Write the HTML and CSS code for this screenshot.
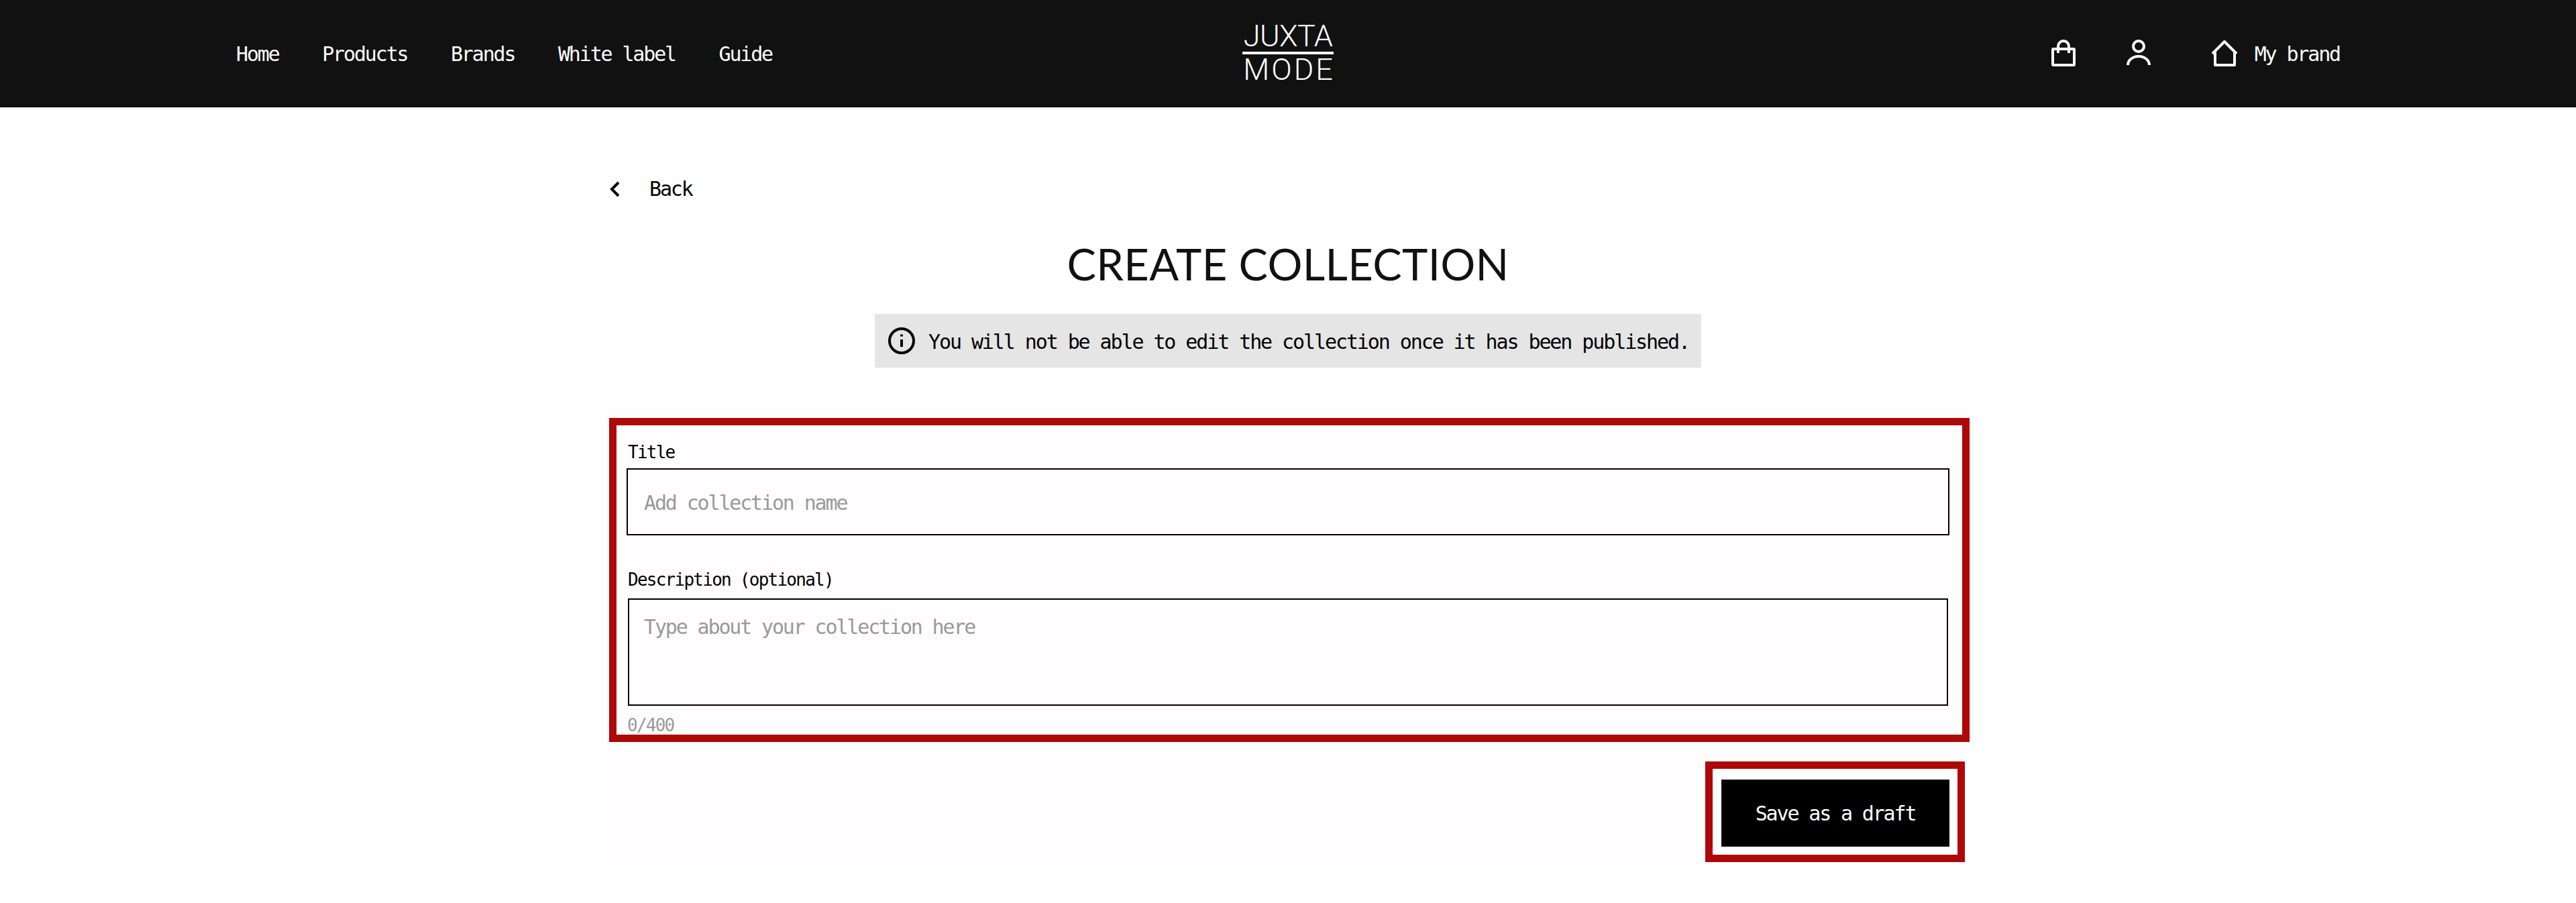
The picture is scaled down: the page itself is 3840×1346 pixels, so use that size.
FILE: index.html
```html
<!DOCTYPE html>
<html lang="en">
<head>
    <meta charset="UTF-8">
    <meta name="viewport" content="width=device-width, initial-scale=1.0">
    <title>Create collection</title>
    <link rel="stylesheet" href="styles.css">
</head>
<body>

    <header class="site-header">
        <nav class="main-nav">
            <a href="#">Home</a>
            <a href="#">Products</a>
            <a href="#">Brands</a>
            <a href="#">White label</a>
            <a href="#">Guide</a>
        </nav>

        <a href="#" class="logo">
            <span class="logo-top">JUXTA</span>
            <span class="logo-bottom">MODE</span>
        </a>

        <div class="header-actions">
            <a href="#" class="icon-link" aria-label="Bag">
                <svg class="icon" viewBox="0 0 48 48"><rect x="8" y="18" width="32" height="24" rx="1"/><path d="M16 24V14a8 8 0 0 1 16 0v10"/></svg>
            </a>
            <a href="#" class="icon-link" aria-label="Account">
                <svg class="icon" viewBox="0 0 48 48"><circle cx="24" cy="14" r="8"/><path d="M8 42a16 13 0 0 1 32 0"/></svg>
            </a>
            <a href="#" class="brand-link">
                <svg class="icon" viewBox="0 0 48 48"><path d="M6 25 24 7l18 18"/><path d="M10 21v21h29V21"/></svg>
                <span>My brand</span>
            </a>
        </div>
    </header>

    <main class="page">
        <a href="#" class="back-link">
            <svg class="back-icon" viewBox="0 0 16 24"><path d="M14 2 4 12l10 10"/></svg>
            <span>Back</span>
        </a>

        <h1 class="page-title">CREATE COLLECTION</h1>

        <div class="notice">
            <svg class="notice-icon" viewBox="0 0 40 40"><circle cx="20" cy="20" r="18"/><path d="M20 18v11"/><path d="M20 10.500v3"/></svg>
            <span>You will not be able to edit the collection once it has been published.</span>
        </div>

        <form class="collection-form">
            <div class="form-fields">
                <label class="field-label" for="title">Title</label>
                <input class="title-input" type="text" id="title" placeholder="Add collection name">

                <label class="field-label desc-label" for="description">Description (optional)</label>
                <textarea class="desc-input" id="description" placeholder="Type about your collection here"></textarea>
                <div class="counter">0/400</div>
            </div>

            <div class="form-actions">
                <div class="draft-box">
                    <button type="button" class="draft-btn">Save as a draft</button>
                </div>
            </div>
        </form>
    </main>

</body>
</html>
```

FILE: styles.css
```css
* {
    box-sizing: border-box;
}

body {
    margin: 0;
    height: 1346px;
    overflow: hidden;
    background: #fff;
    color: #000;
    font-family: "DejaVu Sans Mono", monospace;
    font-size: 30px;
    letter-spacing: -2.150px;
}

a {
    color: inherit;
    text-decoration: none;
}

.site-header {
    height: 160px;
    padding: 3px 352px 0;
    display: grid;
    grid-template-columns: 1fr auto 1fr;
    align-items: center;
    background: #111;
    border-bottom: 2px solid #000;
    color: #fff;
}

.main-nav {
    display: flex;
    gap: 64.500px;
}

.logo {
    width: 136px;
    margin-top: -3px;
    display: flex;
    flex-direction: column;
    font-family: "Roboto", sans-serif;
    font-size: 45px;
    font-weight: 300;
    line-height: 42px;
    letter-spacing: -0.500px;
    text-align: center;
}

.logo-top {
    padding-bottom: 2px;
    border-bottom: 4px solid #fff;
}

.logo-bottom {
    padding-top: 2px;
    letter-spacing: 3px;
    margin-right: -3px;
}

.header-actions {
    margin-top: -3px;
    display: flex;
    justify-content: flex-end;
    align-items: center;
}

.icon {
    display: block;
    width: 48px;
    height: 48px;
    fill: none;
    stroke: #fff;
    stroke-width: 4;
    stroke-linejoin: round;
}

.icon-link {
    margin-right: 64px;
}

.icon-link + .brand-link {
    margin-left: 16px;
}

.brand-link {
    display: flex;
    align-items: center;
    gap: 21px;
}

.brand-link span {
    margin-top: 3px;
}

.page {
    width: 2040px;
    margin: 0 auto;
    display: flex;
    flex-direction: column;
    align-items: center;
}

.back-link {
    align-self: flex-start;
    margin: 105px 0 0 8px;
    display: flex;
    align-items: center;
    gap: 44px;
    line-height: 34px;
}

.back-icon {
    width: 16px;
    height: 24px;
    fill: none;
    stroke: #000;
    stroke-width: 4;
}

.page-title {
    margin: 54px 0 0;
    font-family: "Lato", sans-serif;
    font-size: 65px;
    font-weight: 400;
    line-height: 80px;
    letter-spacing: 0.350px;
    color: #111;
}

.notice {
    margin-top: 35px;
    width: 1232px;
    height: 80px;
    padding: 2px 0 0 20px;
    display: flex;
    align-items: center;
    gap: 20px;
    background: #e5e5e5;
    letter-spacing: -2.090px;
}

.notice-icon {
    width: 40px;
    height: 40px;
    margin-top: -2px;
    fill: none;
    stroke: #000;
    stroke-width: 4;
}

.collection-form {
    margin-top: 64px;
    width: 100%;
    padding: 11px 4px 20px 8px;
    background: #fffdfe;
}

.form-fields {
    height: 483px;
    padding: 21px 19px 0 15px;
    border: 11px solid #ae0808;
}

.field-label {
    display: block;
    height: 43px;
    padding: 2px 0 0 2px;
    font-size: 26px;
    letter-spacing: -1.750px;
    line-height: 34px;
}

.title-input,
.desc-input {
    display: block;
    padding: 2px 24px 0;
    border: 2px solid #000;
    border-radius: 0;
    background: transparent;
    font-family: inherit;
    font-size: inherit;
    letter-spacing: inherit;
    outline: none;
    resize: none;
}

.title-input::placeholder,
.desc-input::placeholder {
    color: #999;
    opacity: 1;
}

.title-input {
    width: 100%;
    height: 100px;
}

.desc-label {
    margin-top: 44px;
    height: 50px;
    padding-top: 5px;
}

.desc-input {
    width: 1968px;
    height: 160px;
    margin-left: 2px;
    padding: 24px 22px 0;
    line-height: 34px;
}

.counter {
    margin: 12px 0 0 1px;
    font-size: 26px;
    letter-spacing: -1.750px;
    line-height: 34px;
    color: #999;
}

.form-actions {
    margin-top: 29px;
    display: flex;
    justify-content: flex-end;
    padding-right: 7px;
}

.draft-box {
    width: 387px;
    height: 150px;
    padding: 16px 12px 12px 13px;
    border: 11px solid #ae0808;
    background: #fff;
}

.draft-btn {
    display: block;
    width: 100%;
    height: 100%;
    padding: 0;
    border: 0;
    background: #000;
    color: #fff;
    font-family: inherit;
    font-size: inherit;
    letter-spacing: inherit;
}
```
